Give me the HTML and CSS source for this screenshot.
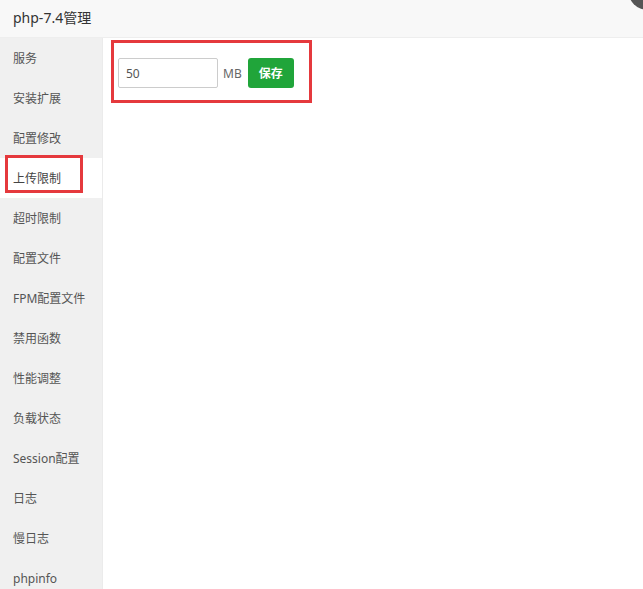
FILE: index.html
```html
<!DOCTYPE html>
<html lang="zh-CN">
<head>
<meta charset="utf-8">
<title>php-7.4管理</title>
<link rel="stylesheet" href="styles.css">
</head>
<body>
<div class="layer">
  <div class="header">php-7.4管理</div>
  <span class="close"></span>
  <div class="body">
    <ul class="menu">
      <li class="item">服务</li>
      <li class="item">安装扩展</li>
      <li class="item">配置修改</li>
      <li class="item active">上传限制<span class="mark"></span></li>
      <li class="item">超时限制</li>
      <li class="item">配置文件</li>
      <li class="item">FPM配置文件</li>
      <li class="item">禁用函数</li>
      <li class="item">性能调整</li>
      <li class="item">负载状态</li>
      <li class="item">Session配置</li>
      <li class="item">日志</li>
      <li class="item">慢日志</li>
      <li class="item">phpinfo</li>
    </ul>
    <div class="content">
      <div class="form-box">
        <input class="size-input" type="text" value="50">
        <span class="unit">MB</span>
        <button class="btn-save">保存</button>
      </div>
    </div>
  </div>
</div>
</body>
</html>
```
FILE: styles.css
```css
* { box-sizing: border-box; }
html, body { margin: 0; padding: 0; }
body {
  width: 643px;
  height: 589px;
  overflow: hidden;
  background: #fff;
  font-family: "Noto Sans", "Noto Sans CJK SC", sans-serif;
  color: #555;
}
.layer {
  position: relative;
  height: 589px;
  display: flex;
  flex-direction: column;
}
.header {
  height: 38px;
  line-height: 36px;
  padding-left: 13px;
  font-size: 14px;
  color: #333;
  background: #f8f8f8;
  border-bottom: 1px solid #eee;
  flex-shrink: 0;
}
.close {
  position: absolute;
  left: 628px;
  top: -30px;
  width: 40px;
  height: 40px;
  border-radius: 50%;
  background: #555;
}
.body {
  flex: 1;
  display: flex;
  min-height: 0;
}
.menu {
  list-style: none;
  margin: 0;
  padding: 0;
  width: 103px;
  background: #f0f0f0;
  border-right: 1px solid #ebebeb;
  flex-shrink: 0;
}
.item {
  position: relative;
  height: 40px;
  padding-top: 2px;
  line-height: 38px;
  padding-left: 13px;
  font-size: 12px;
  color: #555;
  white-space: nowrap;
}
.item.active {
  background: #fff;
  color: #444;
}
.mark {
  position: absolute;
  left: 5px;
  top: -3px;
  width: 78px;
  height: 38px;
  border: 3px solid #e5393d;
}
.content {
  flex: 1;
  padding: 2px 8px;
}
.form-box {
  display: inline-flex;
  align-items: center;
  width: 201px;
  height: 63px;
  padding: 15px 0 12px 4px;
  border: 3px solid #e5393d;
}
.size-input {
  width: 100px;
  height: 30px;
  padding: 0 7px;
  border: 1px solid #ccc;
  border-radius: 2px;
  font-family: inherit;
  font-size: 12px;
  color: #555;
  outline: none;
}
.unit {
  margin-left: 5px;
  font-size: 12px;
  color: #666;
}
.btn-save {
  margin-left: 6px;
  width: 46px;
  height: 30px;
  padding: 0;
  border: none;
  border-radius: 3px;
  background: #20a53a;
  color: #fff;
  font-family: inherit;
  font-size: 12px;
  font-weight: bold;
}
```
